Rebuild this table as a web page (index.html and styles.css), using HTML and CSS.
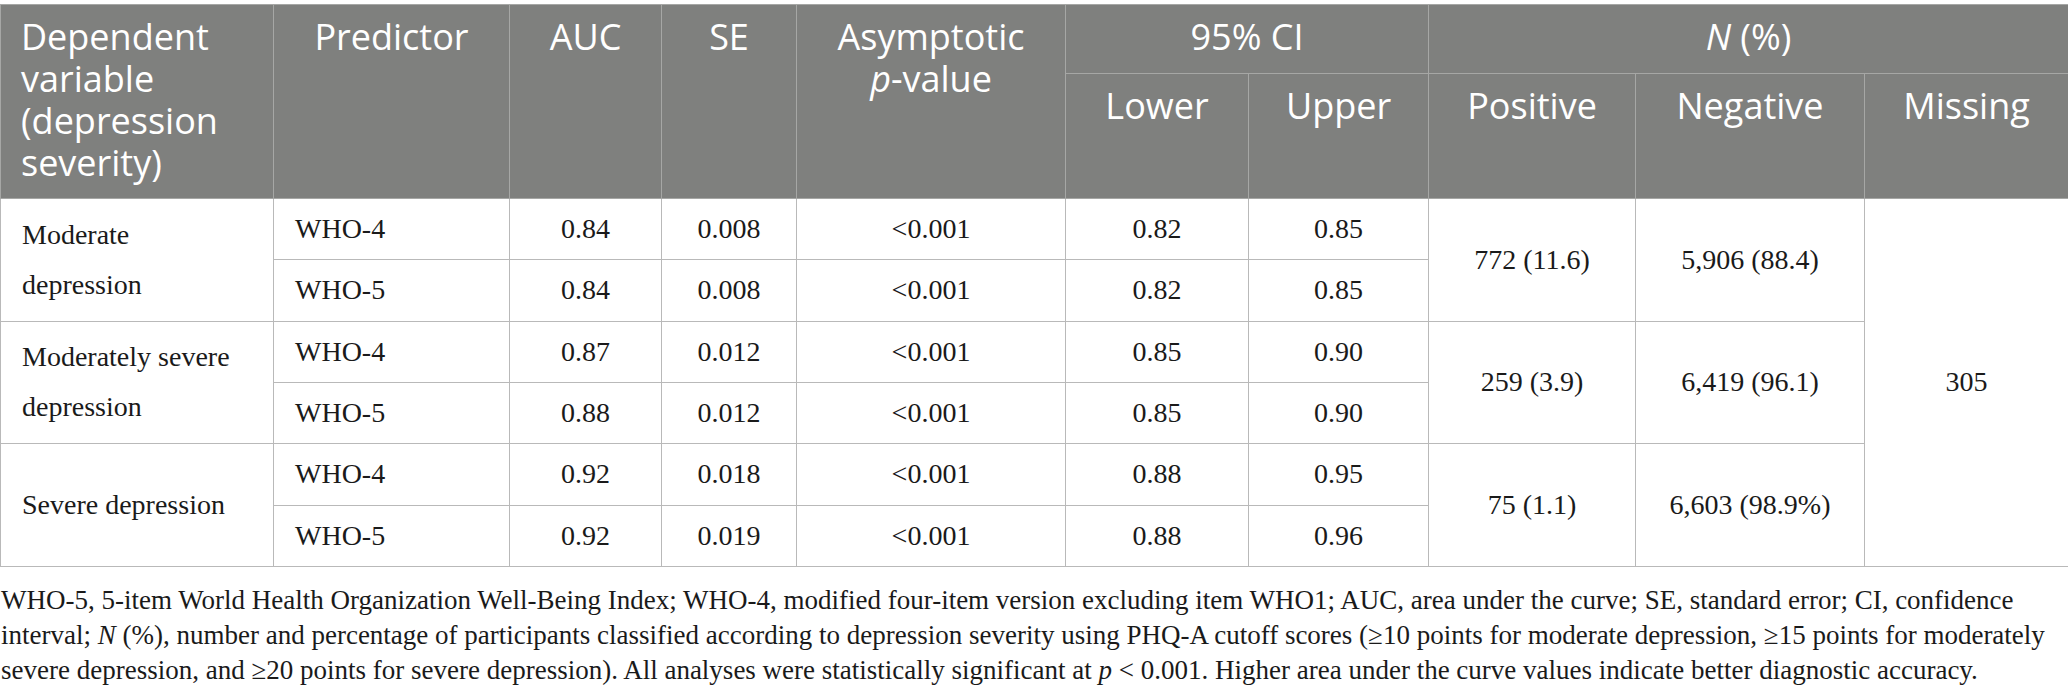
FILE: index.html
```html
<!DOCTYPE html>
<html>
<head>
<meta charset="utf-8">
<link rel="stylesheet" href="styles.css">
</head>
<body>
<table class="data">
  <colgroup>
    <col class="c1"><col class="c2"><col class="c3"><col class="c4"><col class="c5">
    <col class="c6"><col class="c7"><col class="c8"><col class="c9"><col class="c10">
  </colgroup>
  <thead>
    <tr class="h1">
      <th rowspan="2" class="left">Dependent variable (depression severity)</th>
      <th rowspan="2">Predictor</th>
      <th rowspan="2">AUC</th>
      <th rowspan="2">SE</th>
      <th rowspan="2">Asymptotic<br><i>p</i>-value</th>
      <th colspan="2">95% CI</th>
      <th colspan="3"><i>N</i> (%)</th>
    </tr>
    <tr class="h2">
      <th>Lower</th>
      <th>Upper</th>
      <th>Positive</th>
      <th>Negative</th>
      <th>Missing</th>
    </tr>
  </thead>
  <tbody>
    <tr class="r">
      <td rowspan="2" class="left">Moderate<br>depression</td>
      <td class="left">WHO-4</td><td>0.84</td><td>0.008</td><td>&lt;0.001</td><td>0.82</td><td>0.85</td>
      <td rowspan="2">772 (11.6)</td><td rowspan="2">5,906 (88.4)</td><td rowspan="6">305</td>
    </tr>
    <tr class="r">
      <td class="left">WHO-5</td><td>0.84</td><td>0.008</td><td>&lt;0.001</td><td>0.82</td><td>0.85</td>
    </tr>
    <tr class="r">
      <td rowspan="2" class="left">Moderately severe<br>depression</td>
      <td class="left">WHO-4</td><td>0.87</td><td>0.012</td><td>&lt;0.001</td><td>0.85</td><td>0.90</td>
      <td rowspan="2">259 (3.9)</td><td rowspan="2">6,419 (96.1)</td>
    </tr>
    <tr class="r">
      <td class="left">WHO-5</td><td>0.88</td><td>0.012</td><td>&lt;0.001</td><td>0.85</td><td>0.90</td>
    </tr>
    <tr class="r">
      <td rowspan="2" class="left">Severe depression</td>
      <td class="left">WHO-4</td><td>0.92</td><td>0.018</td><td>&lt;0.001</td><td>0.88</td><td>0.95</td>
      <td rowspan="2">75 (1.1)</td><td rowspan="2">6,603 (98.9%)</td>
    </tr>
    <tr class="r">
      <td class="left">WHO-5</td><td>0.92</td><td>0.019</td><td>&lt;0.001</td><td>0.88</td><td>0.96</td>
    </tr>
  </tbody>
</table>
<p class="note">WHO-5, 5-item World Health Organization Well-Being Index; WHO-4, modified four-item version excluding item WHO1; AUC, area under the curve; SE, standard error; CI, confidence<br>interval; <i>N</i> (%), number and percentage of participants classified according to depression severity using PHQ-A cutoff scores (≥10 points for moderate depression, ≥15 points for moderately<br>severe depression, and ≥20 points for severe depression). All analyses were statistically significant at <i>p</i> &lt; 0.001. Higher area under the curve values indicate better diagnostic accuracy.</p>
</body>
</html>
```

FILE: styles.css
```css
html, body {
  margin: 0;
  padding: 0;
  background: #ffffff;
}

body {
  padding-top: 4px;
  font-family: "Liberation Serif", "Times New Roman", serif;
  color: #1a1a1a;
}

.data {
  width: 2068px;
  border-collapse: collapse;
  table-layout: fixed;
}

.c1 { width: 273px; }
.c2 { width: 236px; }
.c3 { width: 152px; }
.c4 { width: 135px; }
.c5 { width: 269px; }
.c6 { width: 183px; }
.c7 { width: 180px; }
.c8 { width: 207px; }
.c9 { width: 229px; }
.c10 { width: 204px; }

.data th {
  background: #7f807e;
  color: #ffffff;
  font-family: "Open Sans", "Noto Sans", sans-serif;
  font-weight: 400;
  font-size: 36px;
  line-height: 42px;
  text-align: center;
  vertical-align: top;
  padding: 11px 10px 0;
  border: 1px solid #a6a7a5;
  white-space: nowrap;
}

.data th.left {
  text-align: left;
  padding-left: 20px;
  white-space: normal;
}

.h1 { height: 69px; }
.h2 { height: 125px; }

.data td {
  font-size: 28px;
  line-height: 50px;
  text-align: center;
  vertical-align: middle;
  padding: 0 10px;
  border: 1px solid #b9b9b9;
  color: #1a1a1a;
  white-space: nowrap;
}

.data td.left {
  text-align: left;
  padding-left: 21px;
}

.r { height: 61.33px; }

.note {
  margin: 16px 0 0 1px;
  font-size: 27px;
  line-height: 35px;
  color: #1a1a1a;
  white-space: nowrap;
}
```
